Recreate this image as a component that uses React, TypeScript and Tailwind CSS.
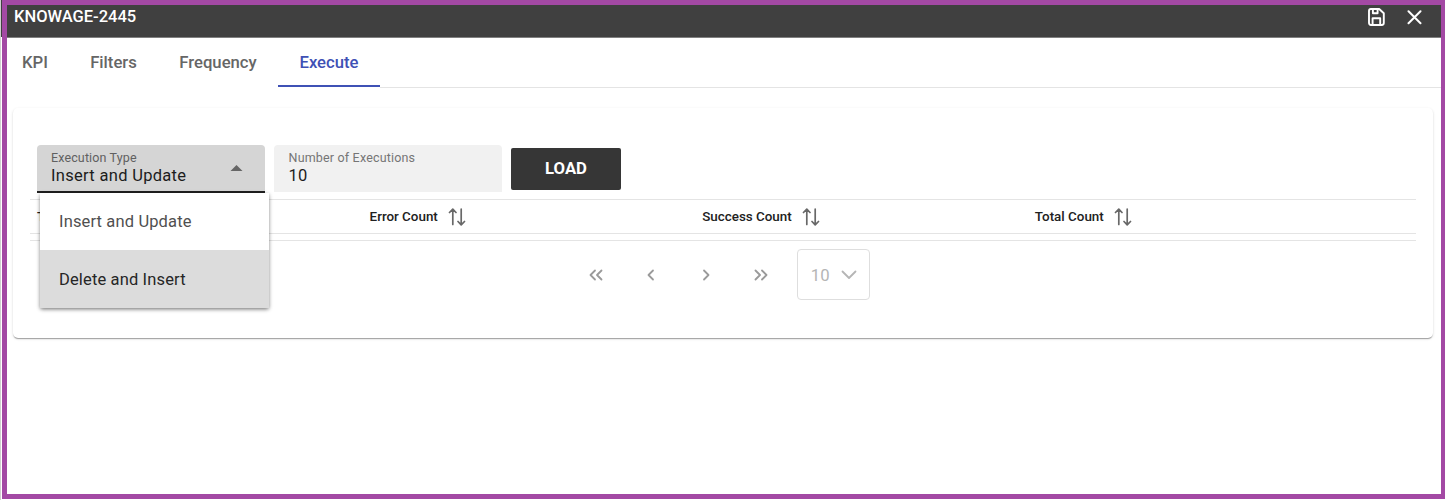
import type { ReactNode } from "react";

const tabs = [
  { label: "KPI", width: "w-[62px] pr-[6px]", active: false },
  { label: "Filters", width: "w-[89px]", active: false },
  { label: "Frequency", width: "w-[120px]", active: false },
  { label: "Execute", width: "w-[102px]", active: true },
];

const columns = ["T", "Error Count", "Success Count", "Total Count"];

function SaveIcon() {
  return (
    <svg width="17" height="18" viewBox="0 0 17 18" fill="none" stroke="#fff" strokeWidth="1.9" strokeLinejoin="round">
      <path d="M2.8 1H11.2L15.8 5.2V14.8Q15.8 17 13.8 17H3Q1 17 1 14.8V3Q1 1 2.8 1Z" />
      <path d="M4.9 1.2V5.2H9.6V1.2M4.6 16.8V10.2H12.2V16.8" />
    </svg>
  );
}

function CloseIcon() {
  return (
    <svg width="15" height="15" viewBox="0 0 15 15" fill="none" stroke="#fff" strokeWidth="2" strokeLinecap="round">
      <path d="M1.5 1.2L13.5 13.2M13.5 1.2L1.5 13.2" />
    </svg>
  );
}

function SortIcon() {
  return (
    <svg width="18" height="18" viewBox="0 0 18 18" fill="none" stroke="#686868" strokeWidth="1.7" strokeLinecap="round" strokeLinejoin="round">
      <path d="M4.8 16.5V1.5M1.5 4.5L4.8 1.2L8 4.5M13.2 1.2V16.2M10 13.5L13.2 16.8L16.5 13.5" />
    </svg>
  );
}

function PageButton({ children }: { children: ReactNode }) {
  return (
    <button className="flex h-[52px] w-[55.2px] items-center justify-center">
      <svg width="16" height="12" viewBox="0 0 16 12" fill="none" stroke="#9a9a9a" strokeWidth="1.8" strokeLinecap="round" strokeLinejoin="round">
        {children}
      </svg>
    </button>
  );
}

export default function App() {
  return (
    <div className="flex h-[500px] w-[1445px] border-l border-[#d0d0d0] bg-white pb-px font-['Roboto','Liberation_Sans',sans-serif]">
      <div className="h-[37px] w-px shrink-0 bg-[#404040]" />
      <div className="flex h-[499px] w-[1443px] flex-col border-[5px] border-r-4 border-[#a349a4]">
        <header className="flex h-[33px] shrink-0 items-start justify-between border-b border-[#808080] bg-[#404040] pr-[19px] pl-[7px] text-white">
          <h1 className="pt-px text-[16.5px] leading-[22px] font-medium">KNOWAGE-2445</h1>
          <div className="flex items-center gap-[22px] pt-[3px]">
            <SaveIcon />
            <CloseIcon />
          </div>
        </header>

        <nav className="flex h-[50px] shrink-0">
          {tabs.map((tab) => (
            <div
              key={tab.label}
              className={`${tab.width} mb-px flex shrink-0 justify-center border-b-2 pt-[14px] text-[16.7px] leading-[22px] font-medium ${
                tab.active ? "border-[#3f51b5] text-[#3f51b5]" : "border-transparent text-[#666]"
              }`}
            >
              {tab.label}
            </div>
          ))}
          <div className="grow border-b border-[#e4e4e4]" />
        </nav>

        <main className="mt-5 ml-1.5 h-[230px] w-[1420px] shrink-0 rounded-[5px] pt-[37px] pl-[17px] shadow-[0_2px_1px_-1px_rgba(0,0,0,0.2),0_1px_1px_0_rgba(0,0,0,0.14),0_1px_3px_0_rgba(0,0,0,0.12)]">
          <div className="flex h-[48px] pl-[7px]">
            <div className="relative mr-[9px] h-[48px] w-[228px] rounded-t-[4px] border-b-2 border-[#212121] bg-[#d5d5d5] pt-[5px] pl-[14px]">
              <div className="text-[12.5px] leading-[16px] tracking-[0.13px] text-[#606060]">Execution Type</div>
              <div className="text-[16.5px] leading-[20px] tracking-[0.3px] text-[#1c1c1c]">Insert and Update</div>
              <svg className="absolute top-[20px] right-[22px]" width="13" height="6" viewBox="0 0 12 6">
                <path d="M0 6L6 0L12 6Z" fill="#666" />
              </svg>
              <div className="absolute top-[48px] left-[3px] z-10 h-[115px] w-[229px] bg-white text-[16.5px] tracking-[0.14px] shadow-[0_2px_4px_-1px_rgba(0,0,0,0.35),0_1px_4px_0_rgba(0,0,0,0.3)]">
                <div className="flex h-[57px] items-center pt-[2px] pl-[19px] text-[#505050]">Insert and Update</div>
                <div className="flex h-[58px] items-center bg-[#dcdcdc] pt-[2px] pl-[19px] text-[#262626]">Delete and Insert</div>
              </div>
            </div>
            <div className="mr-[9px] h-[47px] w-[228px] rounded-t-[4px] bg-[#f1f1f1] pt-[5px] pl-[14.6px]">
              <div className="text-[12.5px] leading-[16px] tracking-[0.17px] text-[#757575]">Number of Executions</div>
              <div className="text-[16.5px] leading-[20px] tracking-[0.2px] text-[#1c1c1c]">10</div>
            </div>
            <button className="mt-[3px] h-[42px] w-[110px] rounded-[2px] bg-[#363636] text-[16.7px] font-bold text-white">LOAD</button>
          </div>

          <div className="mt-[6px] flex h-[35px] w-[1386px] border-y border-[#e4e4e4]">
            {columns.map((column) => (
              <div key={column} className="flex w-[332.6px] items-center pl-[7px] text-[13.4px] font-medium text-[#212121]">
                <span className="pt-px">{column}</span>
                <span className="ml-[10px]">{column !== "T" && <SortIcon />}</span>
              </div>
            ))}
          </div>
          <div className="h-[7px] w-[1386px] border-b border-[#e4e4e4]" />

          <div className="mt-[8px] flex w-[1386px] pl-[538px]">
            <PageButton><path d="M7 1.5L2.5 6L7 10.5M13.5 1.5L9 6L13.5 10.5" /></PageButton>
            <PageButton><path d="M10 1.5L5.5 6L10 10.5" /></PageButton>
            <PageButton><path d="M6 1.5L10.5 6L6 10.5" /></PageButton>
            <PageButton><path d="M2.5 1.5L7 6L2.5 10.5M9 1.5L13.5 6L9 10.5" /></PageButton>
            <div className="ml-[8px] flex h-[51px] w-[73px] items-center rounded-[4px] border border-[#dedede] pt-[2px] pl-[13px] text-[16.7px] tracking-[0.2px] text-[#b5b5b5]">
              10
              <svg className="mb-px ml-[11px]" width="16" height="10" viewBox="0 0 16 10" fill="none" stroke="#b5b5b5" strokeWidth="1.8" strokeLinecap="round" strokeLinejoin="round">
                <path d="M1.5 1.5L8 8L14.5 1.5" />
              </svg>
            </div>
          </div>
        </main>
      </div>
    </div>
  );
}
